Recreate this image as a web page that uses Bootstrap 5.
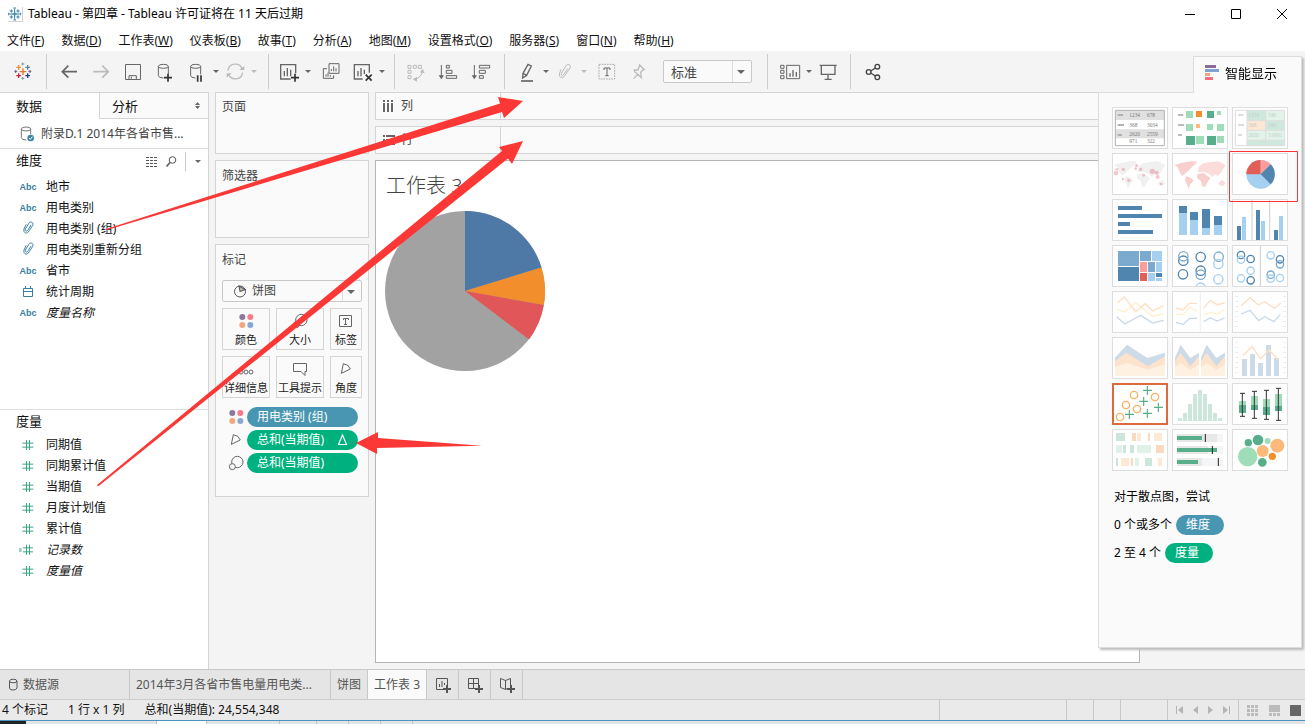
<!DOCTYPE html>
<html lang="zh-CN">
<head>
<meta charset="utf-8">
<meta name="viewport" content="width=device-width, initial-scale=1">
<title>Tableau - 第四章</title>
<link href="https://cdn.jsdelivr.net/npm/bootstrap@5.3.0/dist/css/bootstrap.min.css" rel="stylesheet">
<style>
:root{--line:#d4d4d4;--ink:#333;--pane:#fafafa;--shell:#f4f4f4;--dim:#4996b2;--mea:#00b180}
body{font-family:"Noto Sans","Noto Sans CJK SC",sans-serif;font-size:12px;line-height:20px;color:#111;background:var(--shell);overflow-x:hidden}
svg{display:block;flex:none}
button{font:inherit;color:inherit;background:none;border:0;padding:0}
.ln{fill:none;stroke:currentColor}
.titlebar{height:28px;background:#fff;color:#000;padding-left:8px;gap:5px}
.win-btn{width:46px;height:26px;display:flex;align-items:center;justify-content:center}
.menubar{height:23px;background:#fff;gap:17px;padding:2px 7px 0}
.menubar a{color:#111;text-decoration:none}
.toolbar-row{height:41px;color:#666}
.tb-group{display:flex;align-items:center;gap:8px;height:35px;border-right:1px solid #ccc;padding:0 8px}
.tb-group.wide{padding-left:10px;padding-right:10px}
.tb-group.sorts{gap:9px;padding-right:11px}
.tb-group.fit-group{padding-right:15px}
.tb-group:last-child{border-right:0}
.caret-btn{width:8px;margin:0 -5px}
.caret-btn:last-child{margin-right:0}
.caret-btn::before,.pick::after{content:"";display:block;border:3px solid transparent;border-top:3px solid #666;border-bottom:0;width:0;margin:auto}
.faded{color:#bbb}.caret-btn.faded::before{border-top-color:#bbb}
.pick{position:relative;border:1px solid #c8c8c8;border-radius:2px;background:var(--pane);display:flex}
.pick::after{position:absolute;right:6px;top:9px;border-width:4px 4px 0}
.pick select{appearance:none;border:0;border-right:1px solid #ddd;background:none;width:100%;margin-right:18px;color:#444;padding:0 7px;height:20px;font-size:12px;line-height:20px}
.pick.fit{width:89px;height:23px;margin-left:4px}
.pick.fit select{font-size:13px;height:21px}
.pick.mark-type select{padding-left:29px}
.main-area{position:relative;flex:1}
.data-pane{width:209px;background:#fff;border:1px solid var(--line);border-left:0;border-bottom:0}
.data-pane h2{font-size:13px;line-height:23px;margin:0 0 2px;font-weight:400}
.dims-head{height:25px;margin-bottom:2px}
.dims-head span{border-left:1px solid #ccc;padding:8px 6px 8px 8px}
.pane-tab{height:26px;font-size:13px;text-align:left}
.pane-tab.off{background:var(--pane);border-left:1px solid var(--line);border-bottom:1px solid var(--line);width:109px}
.source{height:30px;padding-left:20px;gap:6px;color:#444;border-bottom:1px solid #ddd}
.half{flex:1 1 0}
.half + .half{border-top:1px solid #ddd}
.field{height:21px;gap:9px;padding-left:19px;display:flex;align-items:center}
.kind{width:18px;flex:none;color:#3a7f9e;display:flex;justify-content:center}
.kind.abc{font:bold 9px/12px "Liberation Sans",sans-serif}
.kind.num{color:#3ba583}
.cards{width:154px;gap:6px;margin:0 6px}
.shelf-card{background:var(--pane);border:1px solid var(--line);color:#444;padding:4px 6px}
.pages{height:62px}
.filters{height:78px;padding-top:5px}
.marks{padding-top:5px;padding-bottom:23px}
.mark-title{margin-bottom:10px}
.mark-grid{display:grid;grid-template-columns:48px 48px 32px;gap:6px;margin:6px 0 9px}
.mark-btn{height:42px;border:1px solid var(--line);font-size:11px;line-height:16px;white-space:nowrap;display:flex;flex-direction:column;align-items:center;justify-content:space-between;padding:3px 0 1px;color:#222}
.mark-btn svg{color:#666}
.mark-list{display:grid;gap:3px;padding-left:5px}
.pill-btn{height:20px;border-radius:10px;color:#fff;background:var(--mea);padding:0 10px;text-align:left;font-size:12px;line-height:20px}
.pill-btn.dim{background:var(--dim)}
.mark-row{height:20px;gap:2px;color:#666}
.mark-row .pill-btn{width:111px}
.work{margin:0 165px 6px 0;gap:6px;flex:1}
.shelf{height:28px;border:1px solid var(--line);background:var(--pane);color:#444}
.shelf-name{width:125px;border-right:1px solid var(--line);padding-left:6px;gap:6px}
.view{flex:1;background:#fff;border:1px solid #b4b4b4;padding:10px 9px}
.view h1{font-size:20px;font-weight:300;line-height:30px;color:#444;margin:0 1px 10px}
.showme{position:absolute;right:3px;top:-36px;width:204px;height:592px;color:#000;filter:drop-shadow(2px 2px 1px #bbb)}
.showme-tab{width:109px;height:37px;background:var(--pane);border:1px solid #ddd;border-bottom:0;align-self:flex-end;z-index:1;margin-bottom:-1px;font-size:13px;gap:5px;padding:0 0 5px 10px}
.showme-body{flex:1;background:var(--pane);border:1px solid #ddd;padding:14px 13px}
.gallery{display:grid;grid-template-columns:repeat(3,56px);gap:4px}
.thumb{height:42px;border:1px solid #ddd;background:#fff;overflow:hidden}
.thumb.best{outline:2px solid #dc6a3c;outline-offset:-2px}
.thumb svg{width:54px;height:40px}
.hints{display:grid;gap:8px;padding-left:2px;margin-top:16px}
.hints .pill-btn{width:48px}
.sheet-tabs{height:30px;background:#e5e5e5;border-top:1px solid #c8c8c8;color:#555}
.sheet-tabs button{border-right:1px solid #c8c8c8;height:29px;padding:0 6px;text-align:left;white-space:nowrap}
.sheet-tabs .on{background:var(--pane)}
.w-src{width:130px}.w-long{width:201px}.w-add{width:32px}
.status{height:22px;background:#eaeaea;border-top:1px solid #ccc;border-bottom:1px solid #4a94bd}
.status span{padding-left:2px;padding-right:18px}
.status .cellbox{border-left:1px solid #c8c8c8}
.c127{width:127px}.c27{width:27px}.c47{width:47px}.c71{width:71px}.c67{width:67px}
.under{height:3px;background:#e5e5e5}
.notes{position:absolute;left:0;top:0;pointer-events:none;z-index:5}
</style>
</head>
<body class="min-vh-100 d-flex flex-column position-relative">
<svg width="0" height="0" class="position-absolute">
<symbol id="hash" viewBox="66 115 36 36"><path class="ln" stroke-width="3" d="M79.500 118v30M88.500 118v30M67 127.500h33M67 139.500h33"/></symbol>
<symbol id="clip" viewBox="61 393 46 46"><g class="ln" stroke-width="3"><path d="M77 403l-7 15c-3 12 10 17 16 5l11-17c4-10-8-13-12-6l-11 18c-2 7 6 8 9 2l9-15"/></g></symbol>
<symbol id="dots" viewBox="50 504 54 54"><circle cx="66" cy="519" r="9" fill="#8c789d"/><circle cx="90" cy="519" r="9" fill="#f77b8b"/><circle cx="66" cy="543" r="9" fill="#f2a77f"/><circle cx="90" cy="543" r="9" fill="#87a8d0"/></symbol>
<symbol id="angle" viewBox="51 571 54 54"><path class="ln" stroke-width="3" d="M70 582L64 611L91 598Q86 584 70 582z"/></symbol>
<symbol id="size" viewBox="51 641 54 54"><g class="ln" stroke-width="3"><circle cx="82" cy="665" r="17"/><circle cx="67" cy="679" r="9" fill="#fafafa"/></g></symbol>
</svg>

<header>
<div class="titlebar d-flex align-items-center">
<svg width="15" height="15" viewBox="24 18 45 45"><path fill="#fff" d="M24 18h45v45H24z"/><path d="M24 62h44V18" class="ln" style="color:#ccc" stroke-width="3"/><path class="ln" style="color:#3a85ad" stroke-width="3" d="M44 22v34M27 39h34M34 25v10M29 30h10M54 25v10M49 30h10M34 43v10M29 48h10M54 43v10M49 48h10M40 21h8M40 57h8M26 35v8M62 35v8M37 39h14M44 32v14"/></svg>
<span>Tableau - 第四章 - Tableau 许可证将在 11 天后过期</span>
<div class="ms-auto d-flex">
<button class="win-btn" aria-label="最小化"><svg width="12" height="12"><path d="M1 6.500h10" class="ln"/></svg></button>
<button class="win-btn" aria-label="最大化"><svg width="12" height="12"><path d="M1.500 1.500h9v9h-9z" class="ln"/></svg></button>
<button class="win-btn" aria-label="关闭"><svg width="12" height="12"><path d="M1 1l10 10M11 1L1 11" class="ln"/></svg></button>
</div></div>
<nav class="menubar d-flex align-items-center">
<a href="#">文件(<u>F</u>)</a><a href="#">数据(<u>D</u>)</a><a href="#">工作表(<u>W</u>)</a><a href="#">仪表板(<u>B</u>)</a><a href="#">故事(<u>T</u>)</a><a href="#">分析(<u>A</u>)</a><a href="#">地图(<u>M</u>)</a><a href="#">设置格式(<u>O</u>)</a><a href="#">服务器(<u>S</u>)</a><a href="#">窗口(<u>N</u>)</a><a href="#">帮助(<u>H</u>)</a>
</nav>
<div class="toolbar-row d-flex align-items-center">
<div class="tb-group wide"><button class="px-0" aria-label="开始"><svg width="26" height="24" viewBox="29 180 78 72"><g class="ln" stroke-width="4"><path stroke="#e8762b" d="M58 215h20M68 205v20"/><path stroke="#eb912c" d="M48 202h14M55 195v14"/><path stroke="#59879b" d="M75 202h14M82 195v14"/><path stroke="#c72037" d="M48 227h14M55 220v14"/><path stroke="#1f447e" d="M75 227h14M82 220v14"/></g><g class="ln" stroke-width="3"><path stroke="#7199a6" d="M63 192h9M67 188v8M63 235h9M67 231v8"/><path stroke="#5b6591" d="M84 214h9M89 210v9M42 214h9M46 210v9"/></g></svg></button></div>
<div class="tb-group wide">
<button aria-label="撤消"><svg width="24" height="24" viewBox="170 180 72 72"><path class="ln" stroke-width="5" d="M230 215h-42M204 197l-18 18 18 18"/></svg></button>
<button class="faded" aria-label="重做"><svg width="24" height="24" viewBox="267 180 72 72"><path class="ln" stroke-width="5" d="M280 215h42M307 197l18 18-18 18"/></svg></button>
<button aria-label="保存"><svg width="24" height="24" viewBox="363 180 72 72"><path class="ln" stroke-width="3" d="M376.500 193.500h45v45h-45zM387 238v-11h22v11M394 230v6"/></svg></button>
<button aria-label="新建数据源"><svg width="24" height="24" viewBox="459 180 72 72"><g class="ln" stroke-width="3"><ellipse cx="490" cy="199" rx="15" ry="6"/><path d="M475 199v28q0 6 15 7M505 199v24"/></g><path class="ln" style="color:#333" stroke-width="5" d="M492 233h24M504 221v24"/></svg></button>
<button aria-label="暂停自动更新"><svg width="24" height="24" viewBox="552 180 72 72"><g class="ln" stroke-width="3"><ellipse cx="584" cy="199" rx="15" ry="6"/><path d="M569 199v28q0 6 14 7M599 199v24"/></g><path style="color:#333" class="ln" stroke-width="5" d="M590 226v19M600 226v19"/></svg></button>
<button class="caret-btn" aria-label="更新选项"></button>
<button class="faded" aria-label="刷新"><svg width="24" height="24" viewBox="667 180 72 72"><path class="ln" stroke-width="4" d="M682 212c2-24 36-26 42-5M726 218c-4 24-36 24-42 4"/><path fill="currentColor" d="M716 210h15v-13zM678 220h15l-15 13z"/></svg></button>
<button class="caret-btn faded" aria-label="刷新选项"></button>
</div>
<div class="tb-group">
<button aria-label="新建工作表"><svg width="24" height="24" viewBox="831 180 72 72"><path class="ln" stroke-width="4" d="M872 237h-30v-43h45v26"/><path class="ln" stroke-width="4" d="M853 213v16M862 204v25M872 209v20"/><path style="color:#333" class="ln" stroke-width="5" d="M873 233h24M885 221v24"/></svg></button>
<button class="caret-btn" aria-label="新建选项"></button>
<button class="ms-1" aria-label="复制工作表"><svg width="24" height="24" viewBox="955 180 72 72"><g class="ln" stroke-width="3"><path d="M985 191h30v29h-30zM979 206h-11v29h31v-9M992 213v-6M999 214v-15M1006 214v-9M976 230v-7M982 230v-12M989 230v-5"/></g></svg></button>
<button aria-label="清除工作表"><svg width="24" height="24" viewBox="1048 180 72 72"><path class="ln" stroke-width="4" d="M1083 237h-25v-43h45v24M1069 213v16M1078 204v25M1088 209v13"/><path style="color:#333" class="ln" stroke-width="5" d="M1092 224l18 18M1110 224l-18 18"/></svg></button>
<button class="caret-btn" aria-label="清除选项"></button>
</div>
<div class="tb-group sorts">
<button class="faded" aria-label="交换行和列"><svg width="24" height="24" viewBox="10 30 72 72"><g class="ln" stroke-width="3"><path d="M25 46h9v9h-9zM41 46h9v9h-9zM56 46h9v9h-9zM25 61h9v9h-9zM25 77h9v9h-9zM68 62q-2 22-24 26"/></g><path fill="currentColor" d="M61 67l8-11 6 14zM39 88l13-8v15z"/></svg></button>
<button aria-label="升序排序"><svg width="24" height="24" viewBox="111 30 72 72"><g class="ln" stroke-width="3"><path d="M127 45v37M142 46h9v8h-9zM142 61h17v9h-17zM142 77h31v8h-31z"/></g><path fill="currentColor" d="M119 76h16l-8 12z"/></svg></button>
<button aria-label="降序排序"><svg width="24" height="24" viewBox="207 30 72 72"><g class="ln" stroke-width="3"><path d="M223 45v37M238 46h31v8h-31zM238 61h18v9h-18zM238 77h12v8h-12z"/></g><path fill="currentColor" d="M215 76h16l-8 12z"/></svg></button>
</div>
<div class="tb-group wide fit-group">
<button aria-label="突出显示"><svg width="24" height="24" viewBox="345 30 72 72"><path class="ln" stroke-width="4" d="M384 43l10 5-14 28-11-6zM369 70l-1 14 12-8"/><path class="ln" stroke-width="5" d="M363 93h36"/></svg></button>
<button class="caret-btn" aria-label="突出显示选项"></button>
<button class="faded" aria-label="组"><svg width="24" height="24" viewBox="456 30 72 72"><path class="ln" stroke-width="3" d="M480 58l-5 14c-1 12 10 15 17 4l15-22c5-10-8-14-12-7l-14 24c-2 6 5 7 7 3l12-18"/></svg></button>
<button class="caret-btn faded" aria-label="组选项"></button>
<button class="ms-1" aria-label="显示标记标签"><svg width="24" height="24" viewBox="584 30 72 72"><path class="ln" stroke-width="3" stroke-dasharray="5 3" style="color:#aaa" d="M596 43h47v44h-47z"/><path class="ln" stroke-width="3" d="M611 60v-6h18v6M620 54v23M615 77h10"/></svg></button>
<button class="faded" aria-label="固定轴"><svg width="24" height="24" viewBox="672 30 72 72"><path class="ln" stroke-width="4" d="M710 45l14 14-5 1-6 7 2 16-11-10-9-8-1-5h11l5-14zM704 73l-12 13"/></svg></button>
<div class="pick fit"><select aria-label="适合"><option>标准</option></select></div>
</div>
<div class="tb-group wide">
<button aria-label="显示/隐藏卡"><svg width="24" height="24" viewBox="1134 30 72 72"><g class="ln" stroke-width="3"><path d="M1142 46h10v9h-10zM1142 61h10v9h-10zM1142 77h10v9h-10zM1160 46h39v40h-39z"/><path stroke-width="4" d="M1170 70v10M1179 60v20M1189 66v14"/></g></svg></button>
<button class="caret-btn" aria-label="卡选项"></button>
<button aria-label="演示模式"><svg width="24" height="24" viewBox="1252 30 72 72"><path class="ln" stroke-width="4" d="M1263 46h51M1268 47v26h41V47M1288 73v14M1278 88h21"/></svg></button>
</div>
<div class="tb-group wide"><button aria-label="共享"><svg width="24" height="24" viewBox="1392 30 72 72"><g class="ln" style="color:#444" stroke-width="4"><circle cx="1415" cy="66" r="7"/><circle cx="1441" cy="50" r="7"/><circle cx="1441" cy="82" r="7"/><path d="M1421 63l14-9M1421 69l14 9"/></g></svg></button></div>
</div>
</header>

<main class="main-area d-flex">
<aside class="data-pane d-flex flex-column">
<div class="d-flex"><button class="pane-tab flex-fill ps-3">数据</button><button class="pane-tab off d-flex align-items-center justify-content-between px-2"><span class="ps-1">分析</span><svg width="5" height="7" viewBox="0 0 5 7"><path fill="#666" d="M0 3l2.500-3L5 3zM0 4h5L2.500 7z"/></svg></button></div>
<div class="source d-flex align-items-center"><svg width="15" height="16" viewBox="63 106 45 48"><g class="ln" style="color:#777" stroke-width="3"><ellipse cx="81" cy="115" rx="14" ry="6"/><path d="M67 115v26q0 6 15 7M95 115v16"/></g><circle cx="95" cy="142" r="10" fill="#3a85a8"/><path d="M90 142l4 4 6-8" stroke="#fff" stroke-width="3" fill="none"/></svg><span class="text-truncate">附录D.1 2014年各省市售...</span></div>
<section class="half">
<div class="dims-head d-flex align-items-center ps-3"><h2 class="flex-fill">维度</h2>
<button aria-label="查看数据"><svg width="12" height="10" viewBox="0 0 12 10"><path class="ln" style="color:#555" stroke-dasharray="3 1" d="M0 .5h12M0 3.500h12M0 6.500h12M0 9.500h12"/></svg></button>
<button class="mx-2" aria-label="查找字段"><svg width="11" height="11" viewBox="0 0 11 11"><g class="ln" style="color:#555"><circle cx="6.500" cy="4" r="3.300"/><path d="M4 6.500L.5 10.500" stroke-width="1.500"/></g></svg></button>
<span><button class="d-block caret-btn m-0" aria-label="维度选项"></button></span></div>
<div class="field"><span class="kind abc">Abc</span>地市</div>
<div class="field"><span class="kind abc">Abc</span>用电类别</div>
<div class="field"><span class="kind"><svg width="15" height="15"><use href="#clip"/></svg></span>用电类别 (组)</div>
<div class="field"><span class="kind"><svg width="15" height="15"><use href="#clip"/></svg></span>用电类别重新分组</div>
<div class="field"><span class="kind abc">Abc</span>省市</div>
<div class="field"><span class="kind"><svg width="12" height="12" viewBox="0 0 12 12"><path class="ln" d="M1.500 2.500h9v8h-9zM1 5.500h10M3.500 0v3M8.500 0v3"/></svg></span>统计周期</div>
<div class="field fst-italic"><span class="kind abc fst-normal">Abc</span>度量名称</div>
</section>
<section class="half">
<h2 class="ps-3">度量</h2>
<div class="field"><span class="kind num"><svg width="12" height="12"><use href="#hash"/></svg></span>同期值</div>
<div class="field"><span class="kind num"><svg width="12" height="12"><use href="#hash"/></svg></span>同期累计值</div>
<div class="field"><span class="kind num"><svg width="12" height="12"><use href="#hash"/></svg></span>当期值</div>
<div class="field"><span class="kind num"><svg width="12" height="12"><use href="#hash"/></svg></span>月度计划值</div>
<div class="field"><span class="kind num"><svg width="12" height="12"><use href="#hash"/></svg></span>累计值</div>
<div class="field fst-italic"><span class="kind num"><svg width="20" height="12" viewBox="54 431 60 36"><path class="ln" stroke-width="3" d="M79.500 433v30M88.500 433v30M69 442.500h30M69 454.500h30M57 446h8M57 452h8"/></svg></span>记录数</div>
<div class="field fst-italic"><span class="kind num"><svg width="12" height="12"><use href="#hash"/></svg></span>度量值</div>
</section>
</aside>

<div class="cards d-flex flex-column">
<section class="shelf-card pages">页面</section>
<section class="shelf-card filters">筛选器</section>
<section class="shelf-card marks">
<div class="mark-title">标记</div>
<div class="pick mark-type"><svg class="position-absolute ms-2 mt-1" width="18" height="13" viewBox="0 0 18 13"><g class="ln" style="color:#555"><circle cx="9" cy="6.500" r="5.500"/><path d="M9 6.500L10 1L14.500 6.500z" fill="#bbb" transform="rotate(-20 9 6.500)"/></g></svg><select aria-label="标记类型"><option>饼图</option></select></div>
<div class="mark-grid">
<button class="mark-btn"><svg width="18" height="18"><use href="#dots"/></svg>颜色</button>
<button class="mark-btn"><svg width="18" height="18"><use href="#size"/></svg>大小</button>
<button class="mark-btn"><svg width="18" height="18" viewBox="0 0 18 18"><path class="ln" d="M2.500 3.500h12v11h-12zM6.500 8V6.500h5V8M8.500 6.500v6M7 12.500h3"/></svg>标签</button>
<button class="mark-btn"><svg width="18" height="18" viewBox="0 0 18 18"><g class="ln"><circle cx="4" cy="12" r="2"/><circle cx="9" cy="12" r="2"/><circle cx="14" cy="12" r="2"/></g></svg>详细信息</button>
<button class="mark-btn"><svg width="18" height="18" viewBox="0 0 18 18"><path class="ln" d="M2.500 3.500h13v8h-1.500v4l-4-4H2.500z"/></svg>工具提示</button>
<button class="mark-btn"><svg width="18" height="18"><use href="#angle"/></svg>角度</button>
</div>
<div class="mark-list">
<div class="mark-row d-flex align-items-center"><svg width="18" height="18"><use href="#dots"/></svg><button class="pill-btn dim">用电类别 (组)</button></div>
<div class="mark-row d-flex align-items-center"><svg width="18" height="18"><use href="#angle"/></svg><button class="pill-btn d-flex align-items-center justify-content-between">总和(当期值)<svg width="11" height="12" viewBox="0 0 11 12"><path class="ln" d="M5.500 1L9.500 10.500H1.500z" stroke-width="1.200"/></svg></button></div>
<div class="mark-row d-flex align-items-center"><svg width="18" height="18"><use href="#size"/></svg><button class="pill-btn">总和(当期值)</button></div>
</div>
</section>
</div>

<div class="work d-flex flex-column">
<div class="shelf d-flex"><div class="shelf-name d-flex align-items-center"><svg width="13" height="13" viewBox="0 0 13 13"><path fill="#666" d="M1 0h2v2H1zM5 0h2v2H5zM9 0h2v2H9zM1 3h2v9H1zM5 3h2v9H5zM9 3h2v9H9z"/></svg>列</div></div>
<div class="shelf d-flex"><div class="shelf-name d-flex align-items-center"><svg width="13" height="13" viewBox="0 0 13 13"><path fill="#666" d="M1 1h2v2H1zM1 5h2v2H1zM1 9h2v2H1zM4 1h9v2H4zM4 5h9v2H4zM4 9h9v2H4z"/></svg>行</div></div>
<section class="view"><h1>工作表 3</h1>
<svg width="160" height="160" viewBox="-80 -80 160 160"><circle r="80" fill="#a2a2a2"/><path fill="#4e79a7" d="M0 0V-80A80 80 0 0 1 76.500-23.500z"/><path fill="#f28e2b" d="M0 0L76.500-23.500A80 80 0 0 1 78.800 14z"/><path fill="#e15759" d="M0 0L78.800 14A80 80 0 0 1 64 48.500z"/></svg>
</section>
</div>

<aside class="showme d-flex flex-column">
<div class="showme-tab d-flex align-items-center"><svg width="16" height="17" viewBox="0 0 16 17"><path fill="#8c6b96" d="M1 1h11v3H1z"/><path fill="#7fa3cd" d="M1 5h14v3H1z"/><path fill="#f2a37c" d="M1 9h5v3H1z"/><path fill="#f76b7c" d="M1 13h8v3H1z"/></svg>智能显示</div>
<div class="showme-body">
<div class="gallery">
<button class="thumb" aria-label="文本表"><svg viewBox="54 174 162 120"><path fill="#e0e0e0" d="M61 181h147v29H61zM61 238h147v27H61z"/><path fill="none" stroke="#b0b0b0" stroke-width="3" d="M61 181h147v106H61z"/><path fill="#b0b0b0" d="M68 192h16v6H68zM68 222h19v6H68zM68 252h13v6H68z"/><g font-family="Liberation Serif,serif" font-size="16" fill="#777"><text x="103" y="202">1234</text><text x="156" y="202">678</text><text x="103" y="230">368</text><text x="156" y="230">3034</text><text x="103" y="257">2620</text><text x="156" y="257">2559</text><text x="103" y="280">971</text><text x="156" y="280">322</text></g></svg></button>
<button class="thumb" aria-label="热图"><svg viewBox="234 174 162 120"><path fill="#bbb" d="M249 192h16v6h-16zM249 222h18v6h-18zM249 252h12v6h-12z"/><path fill="#9fdcb8" d="M273 183h21v21h-21zM366 183h12v12h-12zM273 222h21v21h-21zM336 222h18v18h-18zM366 222h21v21h-21zM303 258h24v24h-24zM366 258h21v21h-21z"/><path fill="#58ad8a" d="M336 183h21v21h-21zM273 258h27v27h-27zM336 258h27v27h-27z"/><path fill="#f28e2b" d="M303 183h18v18h-18z"/><path fill="#ffbb77" d="M303 222h12v12h-12z"/></svg></button>
<button class="thumb" aria-label="突出显示表"><svg viewBox="414 174 162 120"><path fill="#cfe8dd" d="M456 181h56v31h-56zM512 212h57v29h-57zM456 271h56v16h-56zM512 271h57v16h-57z"/><path fill="#e2f3e9" d="M512 181h57v31h-57zM456 241h56v30h-56zM512 241h57v30h-57z"/><path fill="#fde6d2" d="M456 212h56v29h-56z"/><path fill="none" stroke="#ddd" stroke-width="3" d="M421 181h148v106H421zM456 181v106M512 181v106M456 212h113M456 241h113M456 271h113"/><path fill="#ddd" d="M429 192h16v6h-16zM429 222h18v6h-18zM429 252h12v6h-12z"/><g font-family="Liberation Serif,serif" font-size="16" fill="#c4cfc9"><text x="460" y="202">1234</text><text x="519" y="202">546</text><text x="460" y="232">368</text><text x="519" y="232">340</text><text x="460" y="262">2620</text><text x="519" y="262">51890</text></g></svg></button>

<button class="thumb" aria-label="符号地图"><svg viewBox="54 312 162 120"><g fill="#f0f0f0" transform="translate(-181)"><path d="M238 345L262 338L295 333L303 340L290 352L280 362L268 373L262 378L255 368L248 352z"/><path d="M290 333L308 334L300 346zM273 378L288 384L296 392L286 403L280 416L276 404L270 390zM307 373L325 369L338 378L346 384L338 396L331 409L323 411L318 393L306 384zM308 366L312 350L325 340L345 336L370 334L392 346L384 356L378 368L368 378L362 372L352 382L340 370L325 366zM370 398L382 390L392 400L384 408L372 404z"/></g><g fill="#e06070" opacity=".35"><circle cx="63" cy="369" r="7"/><circle cx="66" cy="358" r="4"/><circle cx="85" cy="358" r="5"/><circle cx="84" cy="387" r="4"/><circle cx="101" cy="391" r="5"/><circle cx="125" cy="347" r="5"/><circle cx="137" cy="358" r="5"/><circle cx="122" cy="356" r="4"/><circle cx="146" cy="376" r="4"/><circle cx="172" cy="364" r="8"/><circle cx="185" cy="368" r="6"/><circle cx="188" cy="381" r="6"/><circle cx="198" cy="402" r="4"/></g></svg></button>
<button class="thumb" aria-label="填充地图"><svg viewBox="234 312 162 120"><path fill="#f9cfcd" d="M238 345L262 338L295 333L303 340L290 352L280 362L268 373L262 378L255 368L248 352z"/><path fill="#fcdcdb" d="M290 333L308 334L300 346zM308 366L312 350L325 340L345 336L370 334L392 346L384 356L378 368L368 378L362 372L352 382L340 370L325 366zM370 398L382 390L392 400L384 408L372 404z"/><path fill="#f9cfcd" d="M273 378L288 384L296 392L286 403L280 416L276 404L270 390zM307 373L325 369L338 378L346 384L338 396L331 409L323 411L318 393L306 384z"/></svg></button>
<button class="thumb" aria-label="饼图"><svg viewBox="414 312 162 120"><circle cx="497" cy="373" r="43" fill="#a5d0f0"/><path fill="#e15f58" d="M497 373H454A43 43 0 0 1 497 330z"/><path fill="#ff9d9a" d="M497 373V330A43 43 0 0 1 527 343z"/><path fill="#5085af" d="M497 373L527 343A43 43 0 0 1 527 403z"/></svg></button>

<button class="thumb" aria-label="水平条"><svg viewBox="54 450 162 120"><path fill="#5085af" d="M69 468h72v12H69zM69 492h132v12H69zM69 516h36v12H69zM69 540h105v12H69z"/></svg></button>
<button class="thumb" aria-label="堆叠条"><svg viewBox="234 450 162 120"><path fill="#a5d0f0" d="M252 489h24v66h-24zM285 510h24v45h-24zM321 534h24v21h-24zM357 525h24v30h-24z"/><path fill="#5085af" d="M252 468h24v21h-24zM285 486h24v24h-24zM321 477h24v57h-24zM357 498h24v27h-24z"/></svg></button>
<button class="thumb" aria-label="并排条"><svg viewBox="414 450 162 120"><path stroke="#ccc" stroke-width="3" d="M471 450v120M524 450v120"/><path fill="#5085af" d="M426 528h12v42h-12zM483 480h12v90h-12zM537 540h12v30h-12z"/><path fill="#a5d0f0" d="M441 501h12v69h-12zM498 513h12v57h-12zM552 498h12v72h-12z"/></svg></button>

<button class="thumb" aria-label="树状图"><svg viewBox="54 588 162 120"><path fill="#7caacf" d="M69 603h63v45H69zM135 603h33v30h-33zM159 636h21v30h-21z"/><path fill="#a5d0f0" d="M171 603h30v30h-30zM183 636h18v30h-18zM159 669h21v24h-21zM183 684h18v9h-18z"/><path fill="#5085af" d="M69 651h63v42H69zM183 669h18v12h-18z"/><path fill="#ff9d9a" d="M135 636h21v30h-21z"/><path fill="#e15f58" d="M135 669h21v24h-21z"/></svg></button>
<button class="thumb" aria-label="圆视图"><svg viewBox="234 588 162 120"><g fill="none" stroke-width="4"><g stroke="#5085af"><circle cx="265" cy="632" r="14"/><circle cx="264" cy="673" r="14"/><circle cx="317" cy="621" r="14"/><circle cx="317" cy="662" r="14"/></g><g stroke="#7caacf"><circle cx="265" cy="619" r="14"/><circle cx="371" cy="620" r="14"/><circle cx="317" cy="674" r="14"/></g><g stroke="#a5d0f0"><circle cx="370" cy="642" r="14"/><circle cx="370" cy="688" r="14"/><circle cx="317" cy="713" r="14"/></g></g></svg></button>
<button class="thumb" aria-label="并排圆"><svg viewBox="414 588 162 120"><path stroke="#ccc" stroke-width="3" d="M496 588v120"/><g fill="none" stroke-width="4"><g stroke="#5085af"><circle cx="438" cy="615" r="11"/><circle cx="467" cy="627" r="11"/><circle cx="467" cy="691" r="11"/><circle cx="555" cy="628" r="11"/></g><g stroke="#7caacf"><circle cx="555" cy="643" r="11"/><circle cx="527" cy="674" r="11"/></g><g stroke="#a5d0f0"><circle cx="438" cy="629" r="11"/><circle cx="467" cy="662" r="11"/><circle cx="438" cy="685" r="11"/><circle cx="527" cy="616" r="11"/><circle cx="527" cy="686" r="11"/><circle cx="555" cy="684" r="11"/></g></g></svg></button>

<button class="thumb" aria-label="连续线"><svg viewBox="54 21 162 120"><g fill="none" stroke-width="4"><path stroke="#fff0d0" d="M65 73l24 7 33-27 51 41 33-7"/><path stroke="#fddfc4" d="M68 53l20-17 34 44 29-24 22 22 33-16"/><path stroke="#c9d9e8" d="M65 95l24 22 48-26 36 23 33-8"/></g></svg></button>
<button class="thumb" aria-label="离散线"><svg viewBox="234 21 162 120"><path stroke="#eee" stroke-width="3" d="M316 21v120"/><g fill="none" stroke-width="4"><path stroke="#fff0d0" d="M243 89l22-1 20-22 21 13M326 90l20-8 20 6 23-14"/><path stroke="#fddfc4" d="M243 69l22 6 18-20h23M326 69l20-23 20 13 23-5"/><path stroke="#c9d9e8" d="M243 112l22 6 19-18h22M326 110l20-12 20 10 23-9"/></g></svg></button>
<button class="thumb" aria-label="双线"><svg viewBox="414 21 162 120"><path stroke="#e8e8e8" stroke-width="9" stroke-dasharray="2 13" d="M425 34v95M569 34v95"/><g fill="none" stroke-width="4"><path stroke="#fddfc4" d="M438 62l27-24 25 22 19-10 30 20 18-16"/><path stroke="#c9d9e8" d="M438 87l27-11 26 31 18-12 28 15 19-22"/></g></svg></button>

<button class="thumb" aria-label="面积图（连续）"><svg viewBox="54 159 162 120"><path fill="#cddbe8" d="M60 218l36-39 61 40 53-16v70H60z"/><path fill="#fde3cb" d="M60 228l34-25 64 41 52-30v59H60z"/><path fill="#fef1e2" d="M60 246l36-12 61 20 53-16v35H60z"/></svg></button>
<button class="thumb" aria-label="面积图（离散）"><svg viewBox="234 159 162 120"><g id="area"><path fill="#cddbe8" d="M240 218l17-39 29 40 26-16v70h-72z"/><path fill="#fde3cb" d="M240 228l17-25 29 41 26-30v59h-72z"/><path fill="#fef1e2" d="M240 246l17-12 29 20 26-16v35h-72z"/></g><use href="#area" x="78"/></svg></button>
<button class="thumb" aria-label="双组合"><svg viewBox="414 159 162 120"><path stroke="#e8e8e8" stroke-width="9" stroke-dasharray="2 13" d="M425 172v95M569 172v95"/><path fill="#cddbe8" d="M441 222h15v51h-15zM465 207h15v66h-15zM489 234h15v39h-15zM513 180h15v93h-15zM537 219h15v54h-15z"/><path fill="none" stroke="#fddfc4" stroke-width="4" d="M444 212l27-28 25 38 26-27 28 29"/></svg></button>

<button class="thumb best" aria-label="散点图"><svg viewBox="54 297 162 120"><g fill="none" stroke="#f4b264" stroke-width="4"><circle cx="117" cy="330" r="11"/><circle cx="180" cy="336" r="11"/><circle cx="93" cy="360" r="11"/><circle cx="126" cy="372" r="11"/><circle cx="75" cy="396" r="11"/></g><path stroke="#58ad8a" stroke-width="3.500" d="M144 316h27M157 303v27M133 349h26M146 336v27M177 367h27M190 354v27M144 385h27M157 372v27M90 388h27M103 375v27"/></svg></button>
<button class="thumb" aria-label="直方图"><svg viewBox="234 297 162 120"><path fill="#cde6dc" d="M249 399h12v9h-12zM264 384h12v24h-12zM279 357h12v51h-12zM294 327h12v81h-12zM309 315h12v93h-12zM324 327h12v81h-12zM339 357h12v51h-12zM354 384h12v24h-12zM369 399h12v9h-12z"/></svg></button>
<button class="thumb" aria-label="盒须图"><svg viewBox="414 297 162 120"><path fill="#9fdcb8" d="M432 348h21v12h-21zM468 333h21v27h-21zM504 342h21v24h-21zM540 327h21v36h-21z"/><path fill="#58ad8a" d="M432 360h21v24h-21zM468 360h21v15h-21zM504 366h21v24h-21zM540 363h21v15h-21z"/><path fill="none" stroke="#333" stroke-width="3" d="M442 325v69M435 325h15M435 394h15M478 319v81M471 319h15M471 400h15M514 316v87M507 316h15M507 403h15M550 310v96M543 310h15M543 406h15"/></svg></button>

<button class="thumb" aria-label="甘特图"><svg viewBox="54 435 162 120"><path fill="#cde6dc" d="M63 444h27v24H63zM84 480h9v24h-9zM105 480h12v24h-12zM63 519h6v24h-6zM150 519h21v24h-21z"/><path fill="#fad9be" d="M111 444h12v24h-12zM159 444h6v24h-6zM183 480h24v24h-24zM108 519h6v24h-6z"/><path fill="#fde9d6" d="M126 444h12v24h-12zM177 444h24v24h-24zM78 519h24v24H78zM189 519h12v24h-12z"/><path fill="#e0f2e7" d="M63 480h18v24H63zM126 480h42v24h-42zM120 519h12v24h-12z"/></svg></button>
<button class="thumb" aria-label="标靶图"><svg viewBox="234 435 162 120"><path fill="#f4f5f7" d="M246 447h138v24H246zM246 483h138v24H246zM246 519h138v24H246z"/><path fill="#e7e7e7" d="M246 447h120v24H246zM246 483h93v24H246zM246 519h75v24h-75z"/><path fill="#58ad8a" d="M246 453h75v12h-75zM246 489h120v12H246zM246 525h63v12h-63z"/><path stroke="#222" stroke-width="3" d="M331 447v24M352 483v24M370 519v24"/></svg></button>
<button class="thumb" aria-label="填充气泡图"><svg viewBox="414 435 162 120"><g fill="#9fdcb8"><circle cx="458" cy="515" r="29"/><circle cx="518" cy="468" r="9"/></g><g fill="#58ad8a"><circle cx="460" cy="473" r="11"/><circle cx="489" cy="465" r="16"/><circle cx="502" cy="532" r="13"/></g><g fill="#fdb97a"><circle cx="547" cy="482" r="21"/><circle cx="503" cy="498" r="18"/></g><circle cx="532" cy="514" r="11" fill="#f28e2b"/></svg></button>
</div>
<div class="hints">
<div>对于散点图，尝试</div>
<div class="d-flex align-items-center"><span class="me-1">0 个或多个</span><button class="pill-btn dim">维度</button></div>
<div class="d-flex align-items-center"><span class="me-1">2 至 4 个</span><button class="pill-btn">度量</button></div>
</div>
</div>
</aside>
</main>

<footer>
<div class="sheet-tabs d-flex">
<button class="w-src d-flex align-items-center gap-1 ps-2"><svg width="11" height="14" viewBox="0 0 11 14"><g class="ln"><path d="M1.500 3v7q0 2 3.500 2t4-2V3"/><ellipse cx="5.200" cy="3" rx="3.700" ry="1.800"/></g></svg>数据源</button>
<button class="w-long text-truncate">2014年3月各省市售电量用电类...</button>
<button>饼图</button>
<button class="on">工作表 3</button>
<button class="w-add" aria-label="新建工作表"><svg class="mx-auto" width="18" height="18" viewBox="0 0 18 18"><path class="ln" d="M10 13.500H2.500v-11h11V9M5.500 8v3M8 5v6M10.500 7v2"/><path class="ln" stroke-width="2" d="M9 13h8M13 9v8"/></svg></button>
<button class="w-add" aria-label="新建仪表板"><svg class="mx-auto" width="18" height="18" viewBox="0 0 18 18"><path class="ln" d="M9 12.500H2.500v-10h10V9M7.500 2.500v10M2.500 7.500h10"/><path class="ln" stroke-width="2" d="M9 13h8M13 9v8"/></svg></button>
<button class="w-add" aria-label="新建故事"><svg class="mx-auto" width="18" height="18" viewBox="0 0 18 18"><path class="ln" d="M9 12.500l-1.500 1-5-2v-9l5 2 5-2V9M7.500 4.500v9"/><path class="ln" stroke-width="2" d="M9 13h8M13 9v8"/></svg></button>
</div>
<div class="status d-flex align-items-stretch">
<span>4 个标记</span><span>1 行 x 1 列</span><span>总和(当期值): 24,554,348</span>
<div class="ms-auto cellbox c127"></div><div class="cellbox c27"></div><div class="cellbox c27"></div><div class="cellbox c47"></div>
<div class="cellbox c71 d-flex align-items-center justify-content-between px-2"><button aria-label="第一个"><svg width="7" height="8"><path fill="#b4b4b4" d="M0 0h1v8H0zM7 0v8L2 4z"/></svg></button><button aria-label="上一个"><svg width="5" height="8"><path fill="#b4b4b4" d="M5 0v8L0 4z"/></svg></button><button aria-label="下一个"><svg width="5" height="8"><path fill="#b4b4b4" d="M0 0v8l5-4z"/></svg></button><button aria-label="最后一个"><svg width="7" height="8"><path fill="#b4b4b4" d="M6 0h1v8H6zM0 0v8l5-4z"/></svg></button></div>
<div class="cellbox c67 d-flex align-items-center justify-content-between ps-2 pe-1"><button aria-label="网格"><svg width="11" height="11"><path fill="#bbb" d="M0 0h3v3H0zM4 0h3v3H4zM8 0h3v3H8zM0 4h3v3H0zM4 4h3v3H4zM8 4h3v3H8zM0 8h3v3H0zM4 8h3v3H4zM8 8h3v3H8z"/></svg></button><button aria-label="胶片"><svg width="11" height="11"><path fill="#bbb" d="M0 0h11v7H0zM0 8h3v3H0zM4 8h3v3H4zM8 8h3v3H8z"/></svg></button><button aria-label="单表"><svg width="11" height="11"><path fill="#666" d="M0 0h11v11H0z"/></svg></button></div>
</div>
<div class="under"><svg width="420" height="3"><path fill="#222" d="M0 0h26v3H0z"/><path fill="#fff" d="M157 0h49v3h-49z"/><path fill="#bbb" d="M156 0h1v3h-1zM206 0h1v3h-1zM279 0h1v3h-1zM316 0h1v3h-1zM348 0h1v3h-1zM380 0h1v3h-1zM412 0h1v3h-1z"/></svg></div>
</footer>

<svg class="notes" width="1305" height="724"><g fill="#fb3836"><path d="M106 229L500 103.500L498 97L523 101L504 118L502 112L107 230z"/><path d="M97 485L502 151L499 147L523 141L512 164L508 158.500L98 486.500z"/><path d="M356 443L378 432V438L482 445.700L377 448V454z"/></g><path fill="none" stroke="#f33" d="M1229.500 151.500h68v50h-68z"/></svg>
<script src="https://cdn.jsdelivr.net/npm/bootstrap@5.3.0/dist/js/bootstrap.bundle.min.js"></script>
</body>
</html>
